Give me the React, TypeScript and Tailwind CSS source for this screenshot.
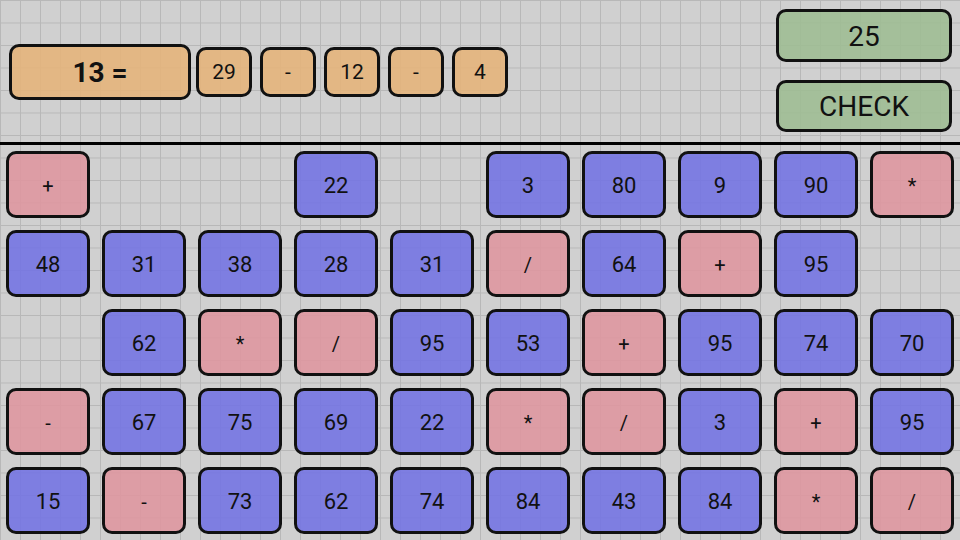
import React from "react";

type Cell = { v: string; kind: "num" | "op" } | null;

const n = (v: string): Cell => ({ v, kind: "num" });
const o = (v: string): Cell => ({ v, kind: "op" });

const board: Cell[][] = [
  [o("+"), null, null, n("22"), null, n("3"), n("80"), n("9"), n("90"), o("*")],
  [n("48"), n("31"), n("38"), n("28"), n("31"), o("/"), n("64"), o("+"), n("95"), null],
  [null, n("62"), o("*"), o("/"), n("95"), n("53"), o("+"), n("95"), n("74"), n("70")],
  [o("-"), n("67"), n("75"), n("69"), n("22"), o("*"), o("/"), n("3"), o("+"), n("95")],
  [n("15"), o("-"), n("73"), n("62"), n("74"), n("84"), n("43"), n("84"), o("*"), o("/")],
];

const expression = ["29", "-", "12", "-", "4"];

export default function App() {
  return (
    <div
      className="w-[960px] h-[540px] overflow-hidden bg-[#d0d0d0] bg-[linear-gradient(to_right,#b8b8b8_1px,transparent_1px),linear-gradient(to_bottom,#b8b8b8_1px,transparent_1px)] bg-[size:20px_22.5px] text-[#111]"
      style={{ fontFamily: "Roboto, 'Noto Sans', sans-serif" }}
    >
      {/* header: target, expression, answer and check */}
      <div className="h-[142px] flex items-start">
        <div className="flex items-center mt-[44px] ml-[9px]">
          <div className="w-[182px] h-[56px] rounded-[10px] border-[3px] border-[#111] bg-[#e4b47b]/90 flex items-center justify-center pt-[1px] text-[28px] font-bold">
            13 =
          </div>
          <div className="flex gap-[8px] ml-[5px]">
            {expression.map((t, i) => (
              <div
                key={i}
                className="w-[56px] h-[50px] rounded-[10px] border-[3px] border-[#111] bg-[#e4b47b]/90 flex items-center justify-center pt-[1px] text-[21px]"
              >
                {t}
              </div>
            ))}
          </div>
        </div>
        <div className="ml-auto mr-[8px] mt-[9px] flex flex-col gap-[18px]">
          <div className="w-[176px] h-[53px] rounded-[10px] border-[3px] border-[#111] bg-[#9fbd94]/90 flex items-center justify-center pt-[2px] text-[28px]">
            25
          </div>
          <button className="w-[176px] h-[52px] rounded-[10px] border-[3px] border-[#111] bg-[#9fbd94]/90 flex items-center justify-center pt-[2px] text-[28px]">
            CHECK
          </button>
        </div>
      </div>

      <div className="h-[3px] bg-black" />

      {/* tile board */}
      <div className="pt-[6px] pl-[6px] grid grid-cols-[repeat(10,84px)] grid-rows-[repeat(5,67px)] gap-x-[12px] gap-y-[12px]">
        {board.flat().map((cell, i) =>
          cell ? (
            <div
              key={i}
              className={
                cell.kind === "num"
                  ? "rounded-[10px] border-[3px] border-[#111] bg-[#7474e2]/90 flex items-center justify-center pt-[2px] text-[22px]"
                  : "rounded-[10px] border-[3px] border-[#111] bg-[#de97a0]/90 flex items-center justify-center pt-[2px] text-[20px]"
              }
            >
              {cell.v}
            </div>
          ) : (
            <div key={i} />
          )
        )}
      </div>
    </div>
  );
}
